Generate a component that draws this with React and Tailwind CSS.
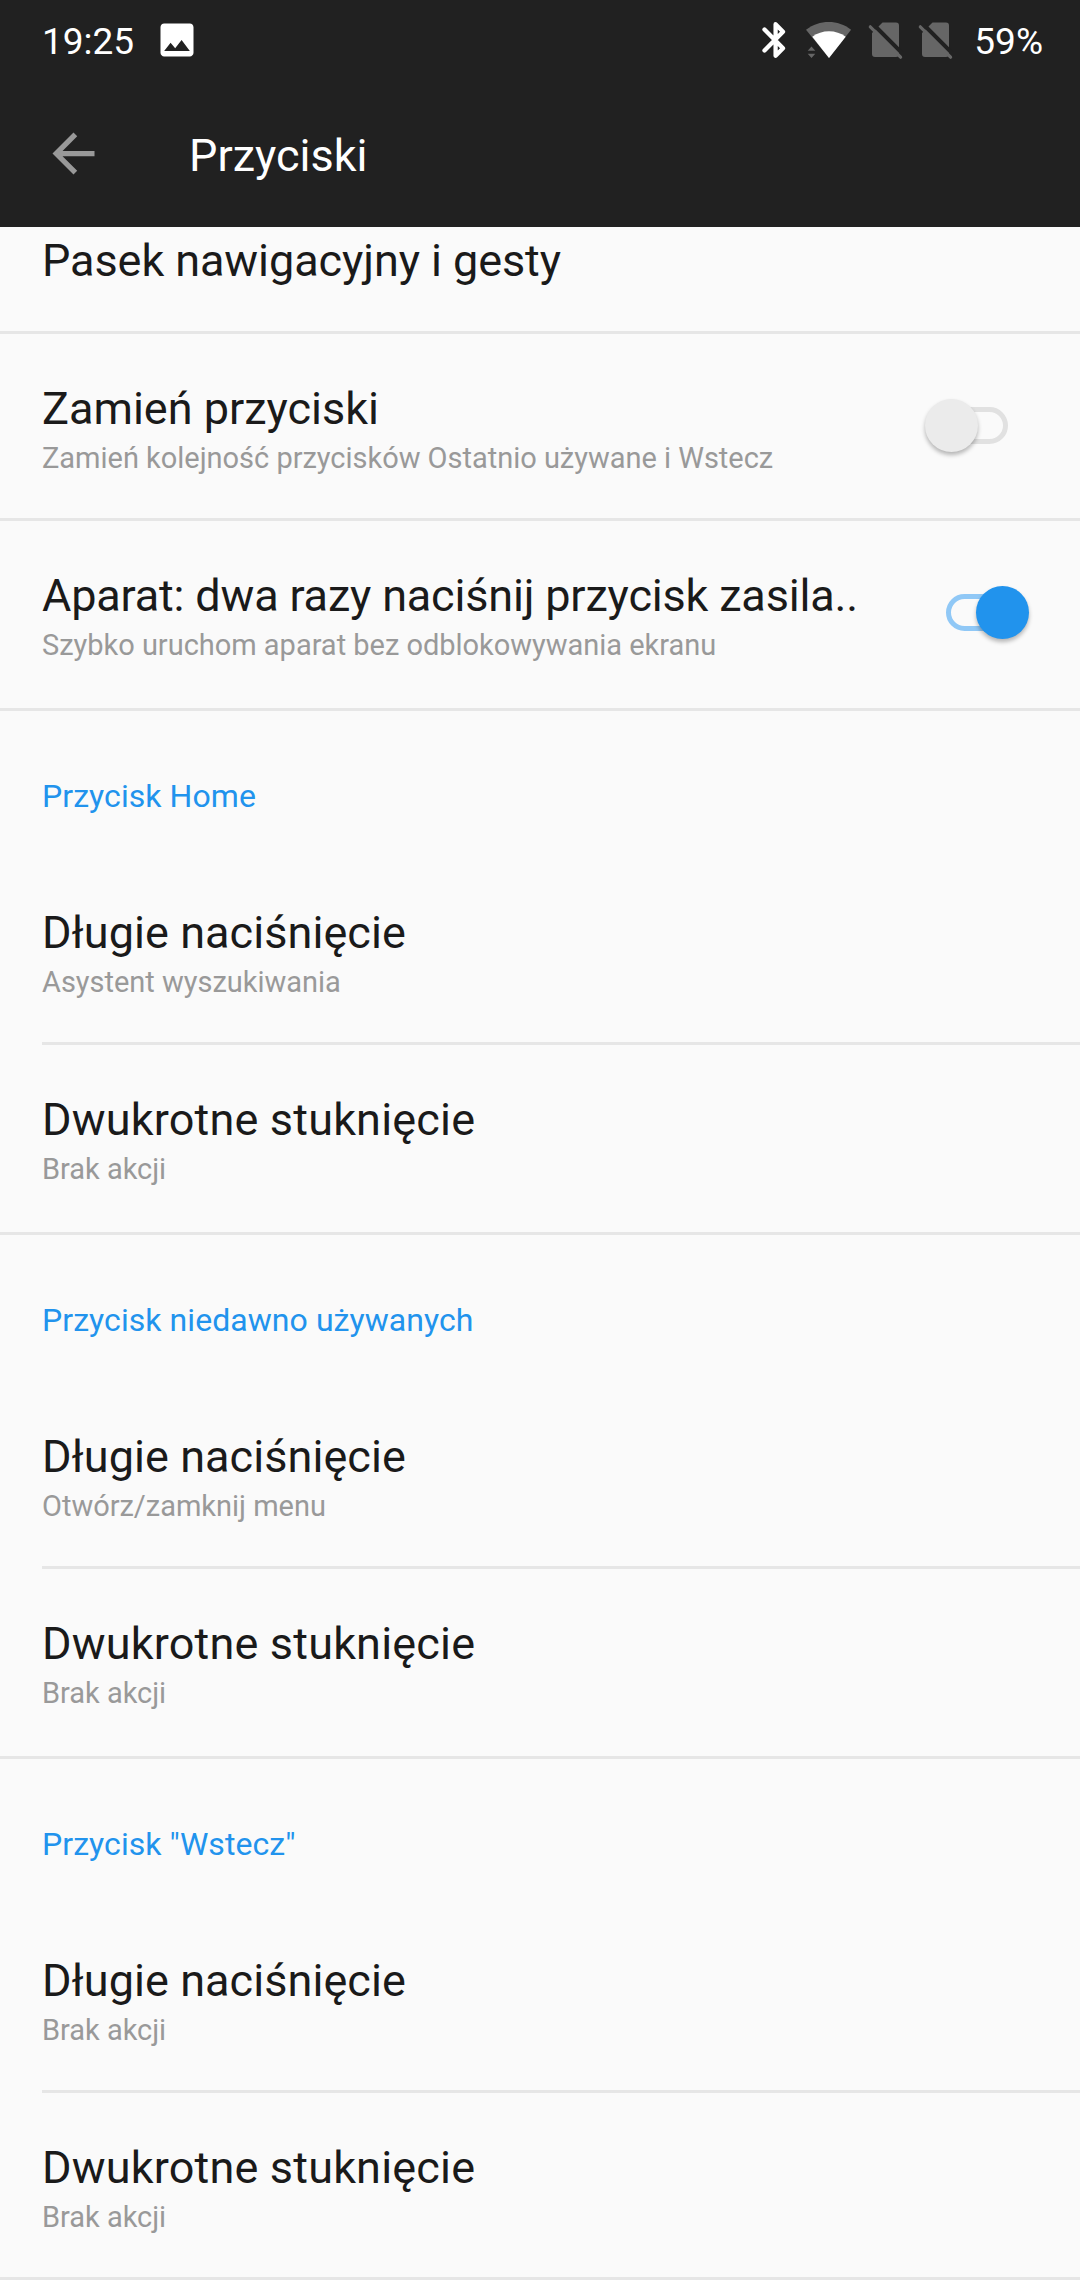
import React, { useState } from 'react';

// Settings groups shown below the two standalone switches
const SECTIONS = [
  {
    title: 'Przycisk Home',
    items: [
      { title: 'Długie naciśnięcie', summary: 'Asystent wyszukiwania', tracking: 'tracking-[0.06px]' },
      { title: 'Dwukrotne stuknięcie', summary: 'Brak akcji', tracking: 'tracking-[0.18px]' },
    ],
  },
  {
    title: 'Przycisk niedawno używanych',
    items: [
      { title: 'Długie naciśnięcie', summary: 'Otwórz/zamknij menu', tracking: 'tracking-[0.06px]' },
      { title: 'Dwukrotne stuknięcie', summary: 'Brak akcji', tracking: 'tracking-[0.18px]' },
    ],
  },
  {
    title: 'Przycisk "Wstecz"',
    items: [
      { title: 'Długie naciśnięcie', summary: 'Brak akcji', tracking: 'tracking-[0.06px]' },
      { title: 'Dwukrotne stuknięcie', summary: 'Brak akcji', tracking: 'tracking-[0.18px]' },
    ],
  },
];

const NoSimIcon = () => (
  <svg className="w-[36px] h-[40px]" viewBox="0 0 36 40" fill="none">
    <path
      d="M14.5 2.5H28a3 3 0 0 1 3 3V34a3 3 0 0 1-3 3H7a3 3 0 0 1-3-3V13z"
      fill="#666666"
    />
    <path d="M4.5 3.5L36 35" stroke="#212121" strokeWidth="4" />
    <path d="M2.3 6.8L32.6 37.2" stroke="#666666" strokeWidth="3.2" strokeLinecap="round" />
  </svg>
);

const StatusBar = () => (
  <div className="flex items-center h-[80px] pl-[42px] text-[37px] leading-[44px] text-white">
    <span className="w-[113px] pt-[4px]">19:25</span>
    {/* Screenshot notification */}
    <svg className="w-[44px] h-[44px]" viewBox="0 0 24 24" fill="#ffffff">
      <path d="M21 19V5c0-1.1-.9-2-2-2H5c-1.1 0-2 .9-2 2v14c0 1.1.9 2 2 2h14c1.1 0 2-.9 2-2zM8.5 13.5l2.5 3.01L14.5 12l4.5 6H5l3.5-4.5z" />
    </svg>

    <div className="flex items-center ml-auto pr-[37px]">
      {/* Bluetooth */}
      <svg className="w-[26px] h-[40px]" viewBox="0 0 26 40" fill="none">
        <path
          d="M3.5 9.5L22 28.3L14.6 35.8V4.2L22 11.7L3.5 30.5"
          stroke="#ffffff"
          strokeWidth="4.3"
          strokeLinecap="round"
          strokeLinejoin="round"
        />
      </svg>
      {/* Wi-Fi */}
      <svg className="w-[48px] h-[40px] ml-[18px]" viewBox="0 0 48 40">
        <path d="M24 38L1 9.800C8 4.500 15.500 2 23.700 2s15.700 2.500 22.400 7.800z" fill="#666666" />
        <path d="M24 38L7.300 16.800C12 13 18 11.200 24 11.200s12 1.800 16.700 5.600z" fill="#ffffff" />
        <path d="M2.700 30.800L6.500 26.600L10.300 30.800zM2.700 33.800H10.300L6.500 38z" fill="#666666" />
      </svg>
      <div className="flex gap-[14px] ml-[15px]">
        <NoSimIcon />
        <NoSimIcon />
      </div>
      <span className="ml-[20px] pt-[4px]">59%</span>
    </div>
  </div>
);

const Toolbar = () => (
  <div className="flex items-center h-[147px] pl-[42px]">
    <svg className="w-[63px] h-[63px]" viewBox="0 0 24 24" fill="#999999">
      <path d="M20 11H7.830l5.590-5.590L12 4l-8 8 8 8 1.410-1.410L7.830 13H20v-2z" />
    </svg>
    <h1 className="ml-[84px] pt-[4px] text-[45px] leading-[52px] text-white">Przyciski</h1>
  </div>
);

const Toggle = ({ defaultOn = false }) => {
  const [on, setOn] = useState(defaultOn);

  return (
    <button
      role="switch"
      aria-checked={on}
      onClick={() => setOn(!on)}
      className="relative shrink-0 w-[62px] h-[37px] mt-[24px] mr-[72px]"
    >
      <span
        className={`block w-full h-full rounded-full border-[5px] ${on ? 'border-[#90c8f6]' : 'border-[#e1e1e1]'}`}
      />
      {/* The thumb is larger than the track and hangs over its end */}
      <span
        className={`absolute top-[-8px] w-[53px] h-[53px] rounded-full shadow-[0_3px_4px_rgba(0,0,0,0.28)] ${
          on ? 'left-[30px] bg-[#2193ed]' : 'left-[-21px] bg-[#ebebeb]'
        }`}
      />
    </button>
  );
};

const Row = ({ title, summary, tracking = '', children }) => (
  <div className="flex items-start justify-between h-[184px] pl-[42px] pt-[49px]">
    <div className="flex flex-col gap-[6px] whitespace-nowrap">
      <span className={`text-[45px] leading-[52px] text-[#1a1a1a] ${tracking}`}>{title}</span>
      <span className="text-[29px] leading-[34px] tracking-[-0.02px] text-[#999999]">{summary}</span>
    </div>
    {children}
  </div>
);

const Divider = ({ inset = false }) => (
  <div className={`h-[3px] bg-[#e6e6e6] ${inset ? 'ml-[42px]' : ''}`} />
);

const Section = ({ title, items, last }) => (
  <section>
    <h2 className="h-[147px] pl-[42px] pt-[66px] text-[32px] leading-[38px] tracking-[0.06px] text-[#2193ed]">
      {title}
    </h2>
    {items.map((item, idx) => (
      <React.Fragment key={item.title}>
        {idx > 0 && <Divider inset />}
        <Row {...item} />
      </React.Fragment>
    ))}
    {!last && <div className="h-[3px]" />}
    <Divider />
  </section>
);

export default function App() {
  return (
    <div className="w-[1080px] h-[2280px] overflow-hidden bg-[#fafafa] font-[Roboto,sans-serif]">
      <header className="h-[227px] bg-[#212121]">
        <StatusBar />
        <Toolbar />
      </header>

      <main>
        {/* Partly scrolled under the toolbar */}
        <div className="h-[104px] pl-[42px] pt-[8px] text-[45px] leading-[52px] tracking-[-0.08px] text-[#1a1a1a]">
          Pasek nawigacyjny i gesty
        </div>
        <Divider />
        <Row title="Zamień przyciski" summary="Zamień kolejność przycisków Ostatnio używane i Wstecz">
          <Toggle />
        </Row>
        <Divider />
        <Row
          title="Aparat: dwa razy naciśnij przycisk zasila.."
          summary="Szybko uruchom aparat bez odblokowywania ekranu"
          tracking="tracking-[-0.18px]"
        >
          <Toggle defaultOn />
        </Row>
        <div className="h-[3px]" />
        <Divider />
        {SECTIONS.map((section, idx) => (
          <Section key={section.title} {...section} last={idx === SECTIONS.length - 1} />
        ))}
      </main>
    </div>
  );
}
